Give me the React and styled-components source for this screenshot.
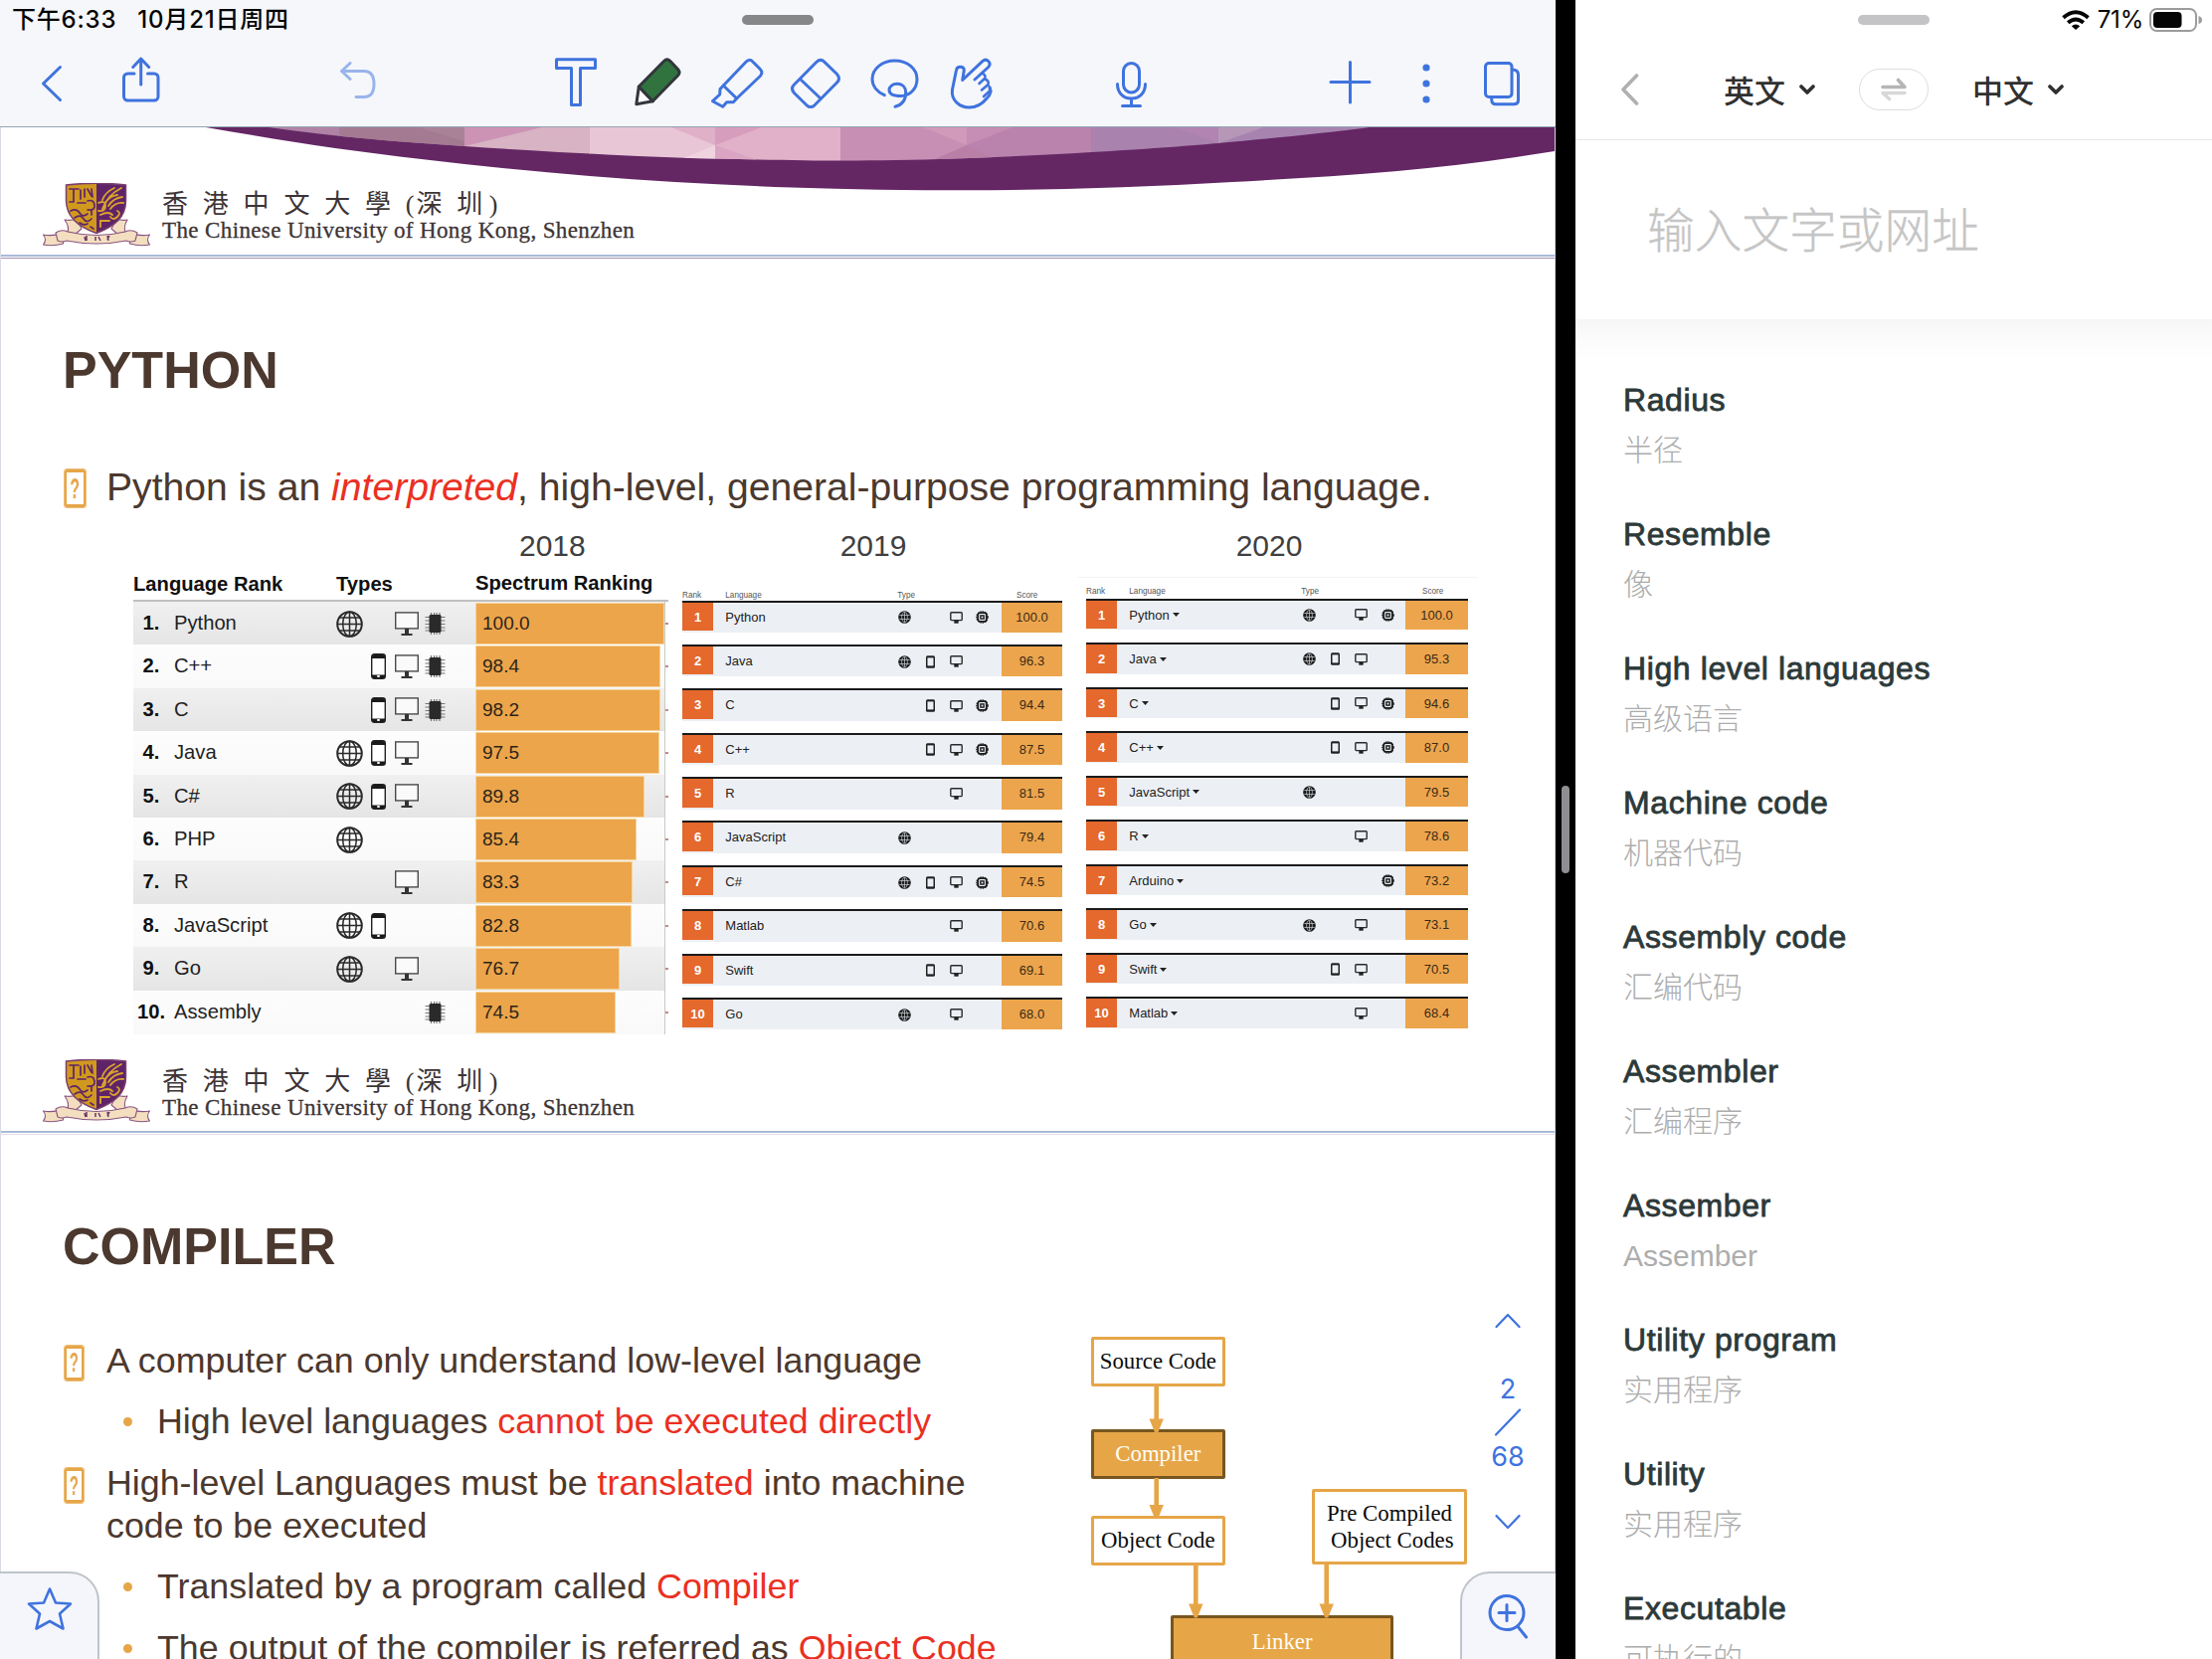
import React from "react";
import styled, { createGlobalStyle, css } from "styled-components";

const BLUE = "#3f73de";
const SANS = '"Liberation Sans", Arial, "Noto Sans CJK SC", sans-serif';
const UI = 'Inter, "Noto Sans CJK SC", sans-serif';

const Global = createGlobalStyle`
  * { box-sizing: border-box; }
  html, body { margin: 0; background: #000; }
  body { width: 2224px; height: 1668px; overflow: hidden; font-family: ${SANS}; }
  svg { display: block; flex: none; }
`;

/* ---------- screen ---------- */

const Screen = styled.div`
  display: flex;
  width: 2224px;
  height: 1668px;
  overflow: hidden;
  background: #000;
`;

const Divider = styled.div`
  width: 20px;
  height: 100%;
  display: flex;
  align-items: center;
  justify-content: center;
`;

const Grip = styled.div`
  width: 8px;
  height: 88px;
  border-radius: 4px;
  background: #8e8e93;
`;

const Handle = styled.div`
  width: 72px;
  height: 10px;
  border-radius: 5px;
  background: ${(p) => p.$color};
`;

/* ---------- notes app ---------- */

const NotesPane = styled.section`
  position: relative;
  width: 1564px;
  height: 1668px;
  display: flex;
  flex-direction: column;
  background: #fff;
  overflow: hidden;
`;

const NotesHeader = styled.header`
  height: 128px;
  background: #f6f7fb;
  border-bottom: 1px solid #93a5b3;
  flex: none;
`;

const StatusBar = styled.div`
  height: 42px;
  display: grid;
  grid-template-columns: 1fr 72px 1fr;
  align-items: start;
  padding: 0 12px;
`;

const StatusText = styled.div`
  display: flex;
  gap: 21px;
  font: 500 24px/40px ${UI};
  letter-spacing: 0.8px;
  color: #050505;
  white-space: nowrap;
`;

const HandleSlot = styled.div`
  padding-top: 15px;
`;

const Toolbar = styled.div`
  display: flex;
  height: 85px;
  padding-top: 11px;
`;

const ToolButton = styled.div`
  flex: none;
  width: 60px;
  height: 60px;
  margin-left: ${(p) => p.$before}px;
  svg {
    fill: none;
    stroke: ${BLUE};
    stroke-width: 3;
    stroke-linecap: round;
    stroke-linejoin: round;
    opacity: ${(p) => (p.$dim ? 0.5 : 1)};
  }
`;

const Tool = ({ before, dim, children }) => (
  <ToolButton $before={before} $dim={dim}>
    <svg width="60" height="60" viewBox="0 0 60 60">{children}</svg>
  </ToolButton>
);

const Pages = styled.main`
  flex: 1;
  min-height: 0;
  display: flex;
  flex-direction: column;
  border-left: 1px solid #d9dae6;
  border-right: 1px solid #d4d6de;
  overflow: hidden;
`;

const TailSlide = styled.article`
  flex: none;
  display: grid;
  height: 128px;
  > * { grid-area: 1 / 1; }
`;

const Slide = styled.article`
  flex: none;
  display: flex;
  flex-direction: column;
  height: ${(p) => p.$height}px;
`;

const PageRule = styled.div`
  flex: none;
  height: 4px;
  border-top: 2px solid #a9bad8;
  border-bottom: 1px solid ${(p) => p.$shade};
`;

const LogoRow = styled.div`
  display: flex;
  align-self: end;
  margin-top: auto;
  width: 100%;
  padding: 0 0 ${(p) => p.$below}px 41px;
  gap: 11px;
`;

const Wordmark = styled.div`
  display: flex;
  flex-direction: column;
  color: #3d3436;
  white-space: nowrap;
`;

const WordmarkHan = styled.div`
  display: flex;
  margin-top: 7.5px;
  font: 400 26px/30px "Liberation Serif", "Noto Sans CJK TC", serif;
  height: 30px;
`;

const Spaced = styled.span`
  letter-spacing: 14.8px;
`;

const Paren = styled.span`
  margin-right: 2px;
`;

const WordmarkLatin = styled.div`
  font: 400 23px/26px "Liberation Serif", serif;
  letter-spacing: 0.38px;
  margin-top: -2px;
  -webkit-text-stroke: 0.3px #3d3436;
`;

const SlideTitle = styled.h1`
  margin: 81.5px 0 0 62px;
  font: 700 52px/60px ${SANS};
  color: #4b382e;
`;

const BulletList = styled.div`
  display: flex;
  flex-direction: column;
  gap: 19.2px;
  margin-top: 64px;
  width: ${(p) => p.$width}px;
  padding-left: 64px;
  font-size: ${(p) => p.$size}px;
  line-height: ${(p) => p.$line}px;
  color: #4b382e;
  white-space: nowrap;
`;

const BulletRow = styled.div`
  display: flex;
`;

const MissingGlyph = styled.span`
  flex: none;
  width: ${(p) => (p.$big ? 21 : 19)}px;
  height: ${(p) => (p.$big ? 38 : 35)}px;
  margin: 6px ${(p) => (p.$big ? 21 : 23)}px 0 0;
  border: 2.500px solid #e6a648;
  border-width: 3px 2.500px;
  outline: 0.500px solid #edbd77;
  border-radius: 2px;
  color: #e6a648;
  font: 700 ${(p) => (p.$big ? 30 : 28)}px/30px "Liberation Sans", sans-serif;
  display: flex;
  justify-content: center;
  align-items: center;
`;

const Question = styled.span`
  transform: scaleX(0.52);
`;

const Dot = styled.span`
  flex: none;
  width: 9px;
  height: 9px;
  margin: 17px 25px 0 59px;
  border-radius: 50%;
  background: #e6a648;
`;

const Red = styled.span`
  color: #ea3023;
  font-style: ${(p) => (p.$italic ? "italic" : "normal")};
`;

/* ---------- ranking tables ---------- */

const Tables = styled.div`
  display: flex;
  align-items: flex-start;
  margin: 17px 0 0 133px;
`;

const TableColumn = styled.section`
  width: ${(p) => p.$width}px;
  margin-right: ${(p) => p.$after}px;
`;

const Year = styled.div`
  padding-left: ${(p) => p.$inset}px;
  font: 400 30px/36px ${SANS};
  color: #404040;
`;

const SpectrumHead = styled.div`
  display: grid;
  grid-template-columns: 204px 140px 1fr;
  height: 38.6px;
  padding-top: 8px;
  font: 700 20.2px/24px ${SANS};
  color: #111;
  border-bottom: 2px solid #bfc0c0;
  white-space: nowrap;
`;

const HeadCell = styled.span`
  margin-top: ${(p) => (p.$up ? -1 : 0)}px;
`;

const SpectrumRow = styled.div`
  display: grid;
  grid-template-columns: 36px 5px 162px 141px 191px 3px;
  height: 43.4px;
  line-height: 43.4px;
  font-size: 20.2px;
  color: #222;
`;

const SpectrumCell = styled.div`
  background: ${(p) =>
    p.$odd ? "linear-gradient(#f0f0f0, #e5e5e5)" : "linear-gradient(#fdfdfd, #f9f9f9)"};
  ${(p) =>
    p.$num &&
    css`
      font-weight: 700;
      color: #111;
      text-align: center;
    `}
`;

const IconStrip = styled(SpectrumCell)`
  display: flex;
  align-items: center;
`;

const Slot = styled.span`
  width: ${(p) => p.$w}px;
  display: flex;
  justify-content: center;
`;

const BarTrack = styled(SpectrumCell)`
  border-right: 1.5px solid #c9cbc6;
  padding: 1px 0;
`;

const Bar = styled.div`
  height: 100%;
  padding-left: 6px;
  line-height: 40px;
  font-size: 19px;
  color: #2c2418;
  background: #eca54b;
  border: 1px solid #f6d49a;
`;

const Tick = styled.div`
  align-self: center;
  height: 2px;
  background: #c78a86;
`;

const CardHead = styled.div`
  display: grid;
  grid-template-columns: 43.3px 173px 1fr 46px;
  align-items: end;
  height: ${(p) => p.$height}px;
  padding-bottom: ${(p) => p.$gap}px;
  font: 400 8.2px/10px ${SANS};
  color: #555;
`;

const TopHairline = styled.div`
  height: 1px;
  margin: 13px -9px -14px;
  background: #f4f4f4;
`;

const CardRow = styled.div`
  display: grid;
  grid-template-columns: 31px 180px 110px 1fr;
  height: ${(p) => p.$body}px;
  margin-bottom: ${(p) => p.$pitch - p.$body}px;
  border-top: 2px solid #1b1b1b;
  background: #ecf0f5;
  font-size: 13px;
  line-height: ${(p) => p.$body - 2}px;
  color: #222;
`;

const RankBadge = styled.div`
  height: 28.5px;
  background: #e5682c;
  color: #fff;
  font-weight: 700;
  text-align: center;
`;

const LangName = styled.div`
  display: flex;
  align-items: center;
  gap: 3px;
  padding-left: 12.3px;
`;

const CardIcons = styled.div`
  display: flex;
  align-items: center;
`;

const Score = styled.div`
  background: #eda54d;
  text-align: center;
  color: #3a2a16;
`;

const Caret = () => (
  <svg width="7" height="4" viewBox="0 0 7 4"><path d="M0 0h7L3.5 4z" fill="#222" /></svg>
);

const BigGlobe = () => (
  <svg width="27" height="27" viewBox="0 0 27 27" fill="none" stroke="#2a2a2a" strokeWidth="1.5">
    <circle cx="13.5" cy="13.5" r="12.3" strokeWidth="2" />
    <ellipse cx="13.5" cy="13.5" rx="6.8" ry="12.3" />
    <path d="M13.5 1v25M1 13.5h25M3 7h21M3 20h21" />
  </svg>
);
const BigPhone = () => (
  <svg width="15" height="26" viewBox="0 0 15 26">
    <rect x="0.7" y="0.7" width="13.6" height="24.6" rx="2.5" fill="#fff" stroke="#222" strokeWidth="1.4" />
    <path d="M1 5V3a2 2 0 0 1 2-2h9a2 2 0 0 1 2 2v2zM1 21.5V23a2 2 0 0 0 2 2h9a2 2 0 0 0 2-2v-1.500z" fill="#1a1a1a" />
    <rect x="6.300" y="22" width="2.400" height="2" fill="#fff" />
  </svg>
);
const BigMonitor = () => (
  <svg width="24" height="25" viewBox="0 0 24 25">
    <rect x="0.7" y="0.900" width="22.600" height="16" fill="#fafafa" stroke="#4a4a4a" strokeWidth="1.4" />
    <path d="M10 17h4v5h3.500v2h-11v-2H10z" fill="#333" />
  </svg>
);
const BigChip = () => (
  <svg width="21" height="24" viewBox="0 0 21 24">
    <path d="M0.500 5.500h20M0.500 9h20M0.500 12.500h20M0.500 16h20M0.500 19h20M6.500 1v22M9.500 1v22M12 1v22M15 1v22" stroke="#777" strokeWidth="1.2" />
    <rect x="4.500" y="3" width="12" height="18" rx="1.500" fill="#2a2a2a" />
  </svg>
);
const Globe = () => (
  <svg width="13" height="13" viewBox="0 0 13 13">
    <circle cx="6.500" cy="6.500" r="6.300" fill="#1c1c1c" />
    <g fill="none" stroke="#cfd3d8" strokeWidth="0.700">
      <ellipse cx="6.500" cy="6.500" rx="2.900" ry="5.200" />
      <path d="M6.500 1.300v10.400M1.300 4.500h10.400M1.300 8.500h10.400" />
    </g>
  </svg>
);
const Phone = () => (
  <svg width="9" height="13" viewBox="0 0 9 13">
    <rect x="0" y="0.200" width="9" height="12.600" rx="1.500" fill="#222" />
    <rect x="1.500" y="2.400" width="6" height="8" fill="#ecf0f5" />
  </svg>
);
const Monitor = () => (
  <svg width="13" height="12" viewBox="0 0 13 12">
    <rect x="0.800" y="0.800" width="11.400" height="7.800" rx="0.800" fill="none" stroke="#2a2a2a" strokeWidth="1.4" />
    <path d="M4.300 9h4.400v2.700H4.300z" fill="#222" />
  </svg>
);
const Chip = () => (
  <svg width="13" height="13" viewBox="0 0 13 13" fill="none" stroke="#1c1c1c">
    <circle cx="6.500" cy="6.500" r="5.500" strokeWidth="1.600" strokeDasharray="1.400 0.900" />
    <rect x="2.200" y="2.200" width="8.600" height="8.600" rx="2" strokeWidth="1.800" />
    <rect x="4.900" y="4.900" width="3.200" height="3.200" strokeWidth="1.400" />
  </svg>
);

const BIG = { g: BigGlobe, p: BigPhone, m: BigMonitor, c: BigChip };
const SMALL = { g: Globe, p: Phone, m: Monitor, c: Chip };

const TypeIcons = ({ set, types, width }) =>
  ["g", "p", "m", "c"].map((k) => {
    const Icon = set[k];
    return <Slot key={k} $w={width}>{types.includes(k) && <Icon />}</Slot>;
  });

const SPECTRUM = [
  ["Python", "gmc", "100.0", 189.5],
  ["C++", "pmc", "98.4", 186.3],
  ["C", "pmc", "98.2", 186.3],
  ["Java", "gpm", "97.5", 184.9],
  ["C#", "gpm", "89.8", 169.9],
  ["PHP", "g", "85.4", 162],
  ["R", "m", "83.3", 158],
  ["JavaScript", "gp", "82.8", 157.4],
  ["Go", "gm", "76.7", 145],
  ["Assembly", "c", "74.5", 140.6],
];

const Y2019 = [
  ["Python", "gmc", "100.0"],
  ["Java", "gpm", "96.3"],
  ["C", "pmc", "94.4"],
  ["C++", "pmc", "87.5"],
  ["R", "m", "81.5"],
  ["JavaScript", "g", "79.4"],
  ["C#", "gpmc", "74.5"],
  ["Matlab", "m", "70.6"],
  ["Swift", "pm", "69.1"],
  ["Go", "gm", "68.0"],
];

const Y2020 = [
  ["Python", "gmc", "100.0"],
  ["Java", "gpm", "95.3"],
  ["C", "pmc", "94.6"],
  ["C++", "pmc", "87.0"],
  ["JavaScript", "g", "79.5"],
  ["R", "m", "78.6"],
  ["Arduino", "c", "73.2"],
  ["Go", "gm", "73.1"],
  ["Swift", "pm", "70.5"],
  ["Matlab", "m", "68.4"],
];

const CardTable = ({ rows, caret, headHeight, headGap, body, pitch }) => (
  <>
    <CardHead $height={headHeight} $gap={headGap}>
      <span>Rank</span><span>Language</span><span>Type</span><span>Score</span>
    </CardHead>
    {rows.map(([name, types, score], i) => (
      <CardRow key={name} $body={body} $pitch={pitch}>
        <RankBadge>{i + 1}</RankBadge>
        <LangName>{name}{caret && <Caret />}</LangName>
        <CardIcons><TypeIcons set={SMALL} types={types} width={caret ? 26.3 : 25.9} /></CardIcons>
        <Score>{score}</Score>
      </CardRow>
    ))}
  </>
);

/* ---------- compile diagram ---------- */

const CompilerBody = styled.div`
  display: flex;
`;

const Diagram = styled.div`
  position: relative;
  flex: none;
  width: 380px;
  height: 340px;
  margin-top: 61px;
`;

const Node = styled.div`
  position: absolute;
  left: ${(p) => p.$x}px;
  top: ${(p) => p.$y}px;
  width: ${(p) => p.$w}px;
  height: ${(p) => p.$h}px;
  display: flex;
  flex-direction: column;
  align-items: center;
  justify-content: center;
  border: 3px solid ${(p) => (p.$solid ? "#775620" : "#e6a648")};
  border-radius: 2px;
  background: ${(p) => (p.$solid ? "#e6a648" : "#fff")};
  color: ${(p) => (p.$solid ? "#fffdf6" : "#0a0a0a")};
  font: 400 22.8px/26.700px "Liberation Serif", serif;
  padding-top: 1px;
  white-space: pre;
`;

const Arrows = styled.svg`
  position: absolute;
  left: 0;
  top: 0;
`;

const Arrow = ({ x, y1, y2 }) => (
  <g fill="#e6a648">
    <rect x={x - 2.3} y={y1} width="4.6" height={y2 - y1 - 10} />
    <path d={`M${x - 7.2} ${y2 - 14}h14.400L${x + 1.500} ${y2}h-3z`} />
  </g>
);

/* ---------- floating controls ---------- */

const PageNav = styled.nav`
  position: absolute;
  right: 34px;
  top: 1318px;
  width: 28px;
  display: flex;
  flex-direction: column;
  align-items: center;
  color: ${BLUE};
  font: 400 27px/34px ${UI};
  svg { fill: none; stroke: ${BLUE}; stroke-width: 2.2; stroke-linecap: round; stroke-linejoin: round; }
`;

const PageNumber = styled.span`
  margin-top: ${(p) => p.$before}px;
`;

const PageSlash = styled.svg`
  margin-top: 1.5px;
`;

const NextPage = styled.svg`
  margin-top: 38px;
`;

const CornerPanel = styled.div`
  position: absolute;
  bottom: -2px;
  ${(p) => p.$side}: -2px;
  width: ${(p) => p.$w}px;
  height: 90px;
  background: #f5f6fb;
  border: 2px solid #bfc5cb;
  border-radius: ${(p) => (p.$side === "left" ? "0 30px 0 0" : "30px 0 0 0")};
  padding: ${(p) => p.$pad};
  svg { fill: none; stroke: ${BLUE}; stroke-width: 3; stroke-linecap: round; stroke-linejoin: round; }
`;

/* ---------- translator app ---------- */

const TranslatePane = styled.section`
  width: 640px;
  height: 1668px;
  background: #fff;
  overflow: hidden;
  display: flex;
  flex-direction: column;
`;

const TranslateHeader = styled.header`
  flex: none;
  height: 141px;
  border-bottom: 1px solid #e6e6e6;
`;

const TranslateStatus = styled.div`
  display: grid;
  grid-template-columns: 1fr 72px 1fr;
  height: 42px;
`;

const DeviceInfo = styled.div`
  display: flex;
  justify-content: flex-end;
  align-items: center;
  height: 40px;
  padding-right: 9px;
  font: 400 24px/40px ${UI};
  letter-spacing: -0.2px;
  color: #050505;
`;

const Percent = styled.span`
  margin: 0 6px 0 8px;
`;

const LanguageBar = styled.div`
  display: flex;
  align-items: center;
  height: 96px;
  padding-left: 45px;
`;

const Language = styled.div`
  display: flex;
  align-items: center;
  gap: 14px;
  margin-left: ${(p) => p.$before}px;
  font: 500 31px/40px "Noto Sans CJK SC", sans-serif;
  color: #303030;
`;

const Swap = styled.div`
  width: 70px;
  height: 42px;
  margin-left: 44px;
  border: 1px solid #dedede;
  border-radius: 21px;
  display: flex;
  align-items: center;
  justify-content: center;
`;

const InputArea = styled.div`
  flex: none;
  height: 180px;
  padding-left: 72px;
  font: 300 47.700px/176px "Noto Sans CJK SC", sans-serif;
  color: #c5c5c5;
  -webkit-text-stroke: 0.3px #c5c5c5;
`;

const History = styled.div`
  flex: none;
  padding: 61px 0 0 48px;
  background: linear-gradient(#f6f6f6, #fbfbfb 18px, #fff 42px);
`;

const Entry = styled.div`
  height: 135px;
`;

const Word = styled.div`
  font: 400 32px/40px ${SANS};
  letter-spacing: 0.6px;
  color: #2c3939;
  -webkit-text-stroke: 0.8px #2c3939;
`;

const Meaning = styled.div`
  margin-top: 10px;
  font: 300 30px/42px "Liberation Sans", "Noto Sans CJK SC", sans-serif;
  color: #adadad;
`;

const WORDS = [
  ["Radius", "半径"],
  ["Resemble", "像"],
  ["High level languages", "高级语言"],
  ["Machine code", "机器代码"],
  ["Assembly code", "汇编代码"],
  ["Assembler", "汇编程序"],
  ["Assember", "Assember"],
  ["Utility program", "实用程序"],
  ["Utility", "实用程序"],
  ["Executable", "可执行的"],
];

const Chevron = () => (
  <svg width="16" height="10" viewBox="0 0 16 10">
    <path d="M2 2l6 6 6-6" fill="none" stroke="#303030" strokeWidth="3.600" strokeLinecap="round" strokeLinejoin="round" />
  </svg>
);

/* ---------- artwork ---------- */

const Banner = () => (
  <svg width="1562" height="66" viewBox="1 128 1562 66">
    <path d="M207 128C250 135.500 294 142.800 337 149C380 155 424 160.300 467 165C509 169.500 551 173.600 593 177C661 182.400 728 186.200 796 188.400C855 190.400 915 191.200 974 191.200C1062 191.200 1151 188 1239 183C1294 180 1350 177 1405 172C1458 167 1510 160.500 1563 152V128Z" fill="#642764" />
    <clipPath id="mosaic">
      <path d="M270 128C340 138 400 142.500 467 147C550 152.500 640 157.500 719 159.500C800 161.500 850 162 900 161C970 159.500 1040 156.500 1097 153C1150 150 1190 147 1225 144C1290 138 1330 134 1377 128Z" />
    </clipPath>
    <g clipPath="url(#mosaic)">
      <rect x="260" y="128" width="82" height="36" fill="#b083a6" />
      <rect x="341" y="128" width="126" height="36" fill="#a98298" />
      <path d="M341 128H420L467 142V150H341Z" fill="#a47a93" />
      <rect x="467" y="128" width="127" height="36" fill="#d8b3c3" />
      <path d="M467 128H545L467 147Z" fill="#cc93b5" />
      <rect x="593" y="128" width="126" height="36" fill="#e8c6d6" />
      <path d="M675 128H719V146Z" fill="#dfb0c8" />
      <path d="M719 146L680 162H719Z" fill="#f0d3df" />
      <rect x="719" y="128" width="126" height="36" fill="#e0b1c8" />
      <path d="M719 128H765L719 146Z" fill="#d79dbd" />
      <path d="M719 146L770 164H719Z" fill="#d9a5c2" />
      <rect x="845" y="128" width="127" height="36" fill="#c78fb4" />
      <path d="M928 128H972V146Z" fill="#d09aba" />
      <rect x="972" y="128" width="126" height="36" fill="#b983ae" />
      <path d="M972 128H1018L972 146Z" fill="#c68eb4" />
      <path d="M972 146L940 160H1000Z" fill="#b97fa6" />
      <rect x="1097" y="128" width="128" height="36" fill="#a982ae" />
      <path d="M1180 128H1225V144Z" fill="#b184b2" />
      <rect x="1225" y="128" width="160" height="36" fill="#a784b0" />
      <path d="M1225 128H1270L1225 144Z" fill="#b797b8" />
    </g>
  </svg>
);

const SHIELD = "M24.500 2Q55-1.500 84.500 2V18C84.500 34 74 43 55 50.500Q25 40 24.500 18Z";

const Crest = () => (
  <svg width="110" height="65" viewBox="0 0 110 65">
    <g fill="#f3dfc0" stroke="#8a5580" strokeWidth="1.100" strokeLinejoin="round">
      <path d="M24 37q5 1 11-1l5 10-6 5-8-2q2-5-3-12z" />
      <path d="M86 37q-5 1-11-1l-5 10 6 5 8-2q-2-5 2-12z" />
      <path d="M1.500 52q9 2 20-2v11q-10 3-20 1 4-5 0-10z" />
      <path d="M108.500 52q-9 2-20-2v11q10 3 20 1-4-5 0-10z" />
      <path d="M14 50q6-4 12-1 29 7 58 0 6-3 12 1l-2 8q-5 2-9 0-30 6-60 0-5 2-9 0z" />
    </g>
    <path d="M43 54l1 4M45 53v5M54 54v4M57 54l2 4M66 53l1 5M68 53l-2 4" stroke="#6a3566" strokeWidth="1.500" />
    <path d={SHIELD} fill="#d0991e" />
    <path d="M55 0.300Q70 0.500 84.500 2V18C84.500 34 74 43 55 50.500Z" fill="#5f2468" />
    <g fill="none" stroke="#5f2468" strokeWidth="1.700" strokeLinecap="round">
      <path d="M28 6h9M32 6v13h-4M39 7v9M43 6v8M46 6l4 7M50 6l1 8M36 20h8M46 18q6-2 7 4t-7 5M29 28q6-3 9 2t8 1M33 35q6-4 9 1t8 0M38 40q4 3 8 1M50 28v4M49 44l3 2" />
    </g>
    <g fill="none" stroke="#d9a32c" strokeWidth="1.900" strokeLinecap="round">
      <path d="M80 5Q66 12 61 26M73 5q-9 4-12 12M76 12q-8 1-12 8M81 14q-9 1-14 9M82 20q-8-1-13 6M57 20q7-3 7 3t-7 5M59 32q8-4 12 0M76 28q4 2 0 6t-7 0M59 44v-6h9" />
    </g>
    <path d={SHIELD} fill="none" stroke="#7a3f6e" strokeWidth="1.500" />
  </svg>
);

const UniversityLogo = ({ below }) => (
  <LogoRow $below={below}>
    <Crest />
    <Wordmark>
      <WordmarkHan><Spaced>香港中文大學</Spaced><Paren>(</Paren><Spaced>深</Spaced>圳<span>&nbsp;)</span></WordmarkHan>
      <WordmarkLatin>The Chinese University of Hong Kong, Shenzhen</WordmarkLatin>
    </Wordmark>
  </LogoRow>
);

const Missing = ({ big }) => (
  <MissingGlyph $big={big}><Question>?</Question></MissingGlyph>
);

export default function App() {
  return (
    <>
      <Global />
      <Screen>
        <NotesPane>
          <NotesHeader>
            <StatusBar>
              <StatusText><span>下午6:33</span><span>10月21日周四</span></StatusText>
              <HandleSlot><Handle $color="#868789" /></HandleSlot>
            </StatusBar>
            <Toolbar>
              <Tool before={22}><path d="M38.500 14.500L21.500 31l17 16.500" /></Tool>
              <Tool before={30}>
                <path d="M23 21H16.500a4 4 0 0 0-4 4V44a4 4 0 0 0 4 4H43a4 4 0 0 0 4-4V25a4 4 0 0 0-4-4H36.500M29.700 32V6M21.700 14.500L29.700 6l8 8.500" />
              </Tool>
              <Tool before={158} dim>
                <path d="M13.500 18.500H36C43 18.500 46 23 46 31.500S43 44.500 36 44.500H28M22 10.500L13.500 18.500 22 26.500" />
              </Tool>
              <Tool before={159}><path d="M10.500 6.800H49.500V15.500H34.500V52.500H25.500V15.500H10.500Z" /></Tool>
              <Tool before={22}>
                <path d="M11.300 34L8.800 51.700L25.300 48.700Z" fill="#fff" stroke="#33363d" />
                <path d="M11.300 34L36.500 8.500Q39.700 5.500 42.700 8.300L50.500 16.500Q53.500 20 50.500 23L25.300 48.700Z" fill="#30733e" stroke="#33363d" />
              </Tool>
              <Tool before={20}>
                <path d="M16.300 33L39 9.300Q42.500 5.500 46 9.200L53.300 16.500Q56.500 20.200 53.300 23.500L29.700 46Z" />
                <path d="M16.300 33L13 36.500L12.700 42L5.500 48.700L15.700 54.300L19.700 49.700H26.300L29.700 46" />
              </Tool>
              <Tool before={19}>
                <path d="M8.500 32L31 9.300Q35 5.500 39 9.300L51.500 21.500Q55.500 26 51.500 30L29 52.800Q25 56.300 21 52.800L8.500 40.500Q4.500 36 8.500 32ZM14.500 26.500L35 46" />
              </Tool>
              <Tool before={19}>
                <path d="M20.300 42.700C13 39.500 8 33.500 8 26.500C8 16 18 8 30.700 8S53 16 53 26.500C53 36 46 43.500 37 43.500C29 43.500 25 41 25 37.500C25 34 28.500 31.300 33 31.300C38.500 31.300 41.700 35 41.700 40C41.700 47 38 52.500 31 54.300" />
              </Tool>
              <Tool before={17}>
                <path d="M34 27L47.700 14.500C51.500 10 46 5 42 8.300L21.700 27.500L23.300 17.500C23.300 13.500 16.300 13 15.500 17.500L11.500 37C10 48 19 55 28.500 55C36 55 42 51 46 46C49.500 42.500 51 38.500 49 36" />
                <path d="M40.500 21.500Q45.500 23.500 43.500 27L38 32M44 27.500Q49 30 46.500 33.500L40.500 38.500M47 34Q51 36.500 48 40L42.500 45" strokeWidth="2.600" transform="translate(0.500 -1)" />
              </Tool>
              <Tool before={101}>
                <rect x="22.500" y="10.500" width="16" height="29.500" rx="8" />
                <path d="M16.500 31.500C16.500 40 22 46 30.500 46S44.500 40 44.500 31.500M30.500 46V53.500M21.500 53.500H39.500" />
              </Tool>
              <Tool before={160}><path d="M11 29.500H50M30.500 9.500V50" /></Tool>
              <Tool before={17}>
                <g fill={BLUE} stroke="none">
                  <circle cx="30" cy="15" r="3.600" /><circle cx="30" cy="31" r="3.600" /><circle cx="30" cy="47" r="3.600" />
                </g>
              </Tool>
              <Tool before={16}>
                <rect x="13.500" y="10.500" width="26.500" height="34" rx="3.500" />
                <path d="M40.500 17Q46.500 17 46.500 22.500V47.500Q46.500 51.800 42 51.800H24Q19.700 51.800 19.700 47V45" />
              </Tool>
            </Toolbar>
          </NotesHeader>

          <Pages>
            <TailSlide>
              <Banner />
              <UniversityLogo below={7.5} />
            </TailSlide>
            <PageRule $shade="#a392b2" />

            <Slide $height={877}>
              <SlideTitle>PYTHON</SlideTitle>
              <BulletList $width={1562} $size={39.11} $line={48}>
                <BulletRow>
                  <Missing big />
                  <span>Python is an <Red $italic>interpreted</Red>, high-level, general-purpose programming language.</span>
                </BulletRow>
              </BulletList>
              <Tables>
                <TableColumn $width={538} $after={14}>
                  <Year $inset={388}>2018</Year>
                  <SpectrumHead>
                    <HeadCell>Language Rank</HeadCell>
                    <HeadCell>Types</HeadCell>
                    <HeadCell $up>Spectrum Ranking</HeadCell>
                  </SpectrumHead>
                  {SPECTRUM.map(([name, types, value, width], i) => {
                    const odd = i % 2 === 0;
                    return (
                      <SpectrumRow key={name}>
                        <SpectrumCell $odd={odd} $num>{i + 1}.</SpectrumCell>
                        <SpectrumCell $odd={odd} />
                        <SpectrumCell $odd={odd}>{name}</SpectrumCell>
                        <IconStrip $odd={odd}><TypeIcons set={BIG} types={types} width={28.7} /></IconStrip>
                        <BarTrack $odd={odd}><Bar style={{ width }}>{value}</Bar></BarTrack>
                        <Tick />
                      </SpectrumRow>
                    );
                  })}
                </TableColumn>
                <TableColumn $width={382} $after={24}>
                  <Year $inset={158.7}>2019</Year>
                  <CardTable rows={Y2019} headHeight={37} headGap={0} body={32.5} pitch={44.38} />
                </TableColumn>
                <TableColumn $width={384} $after={0}>
                  <Year $inset={150.7}>2020</Year>
                  <TopHairline />
                  <CardTable rows={Y2020} caret headHeight={35} headGap={1.5} body={31.5} pitch={44.56} />
                </TableColumn>
              </Tables>
              <UniversityLogo below={7} />
            </Slide>
            <PageRule $shade="#e4dce8" />

            <Slide $height={560}>
              <SlideTitle>COMPILER</SlideTitle>
              <CompilerBody>
                <BulletList $width={1096} $size={35.8} $line={42.6}>
                  <BulletRow><Missing /><span>A computer can only understand low-level language</span></BulletRow>
                  <BulletRow><Dot /><span>High level languages <Red>cannot be executed directly</Red></span></BulletRow>
                  <BulletRow>
                    <Missing />
                    <span>High-level Languages must be <Red>translated</Red> into machine<br />code to be executed</span>
                  </BulletRow>
                  <BulletRow><Dot /><span>Translated by a program called <Red>Compiler</Red></span></BulletRow>
                  <BulletRow><Dot /><span>The output of the compiler is referred as <Red>Object Code</Red></span></BulletRow>
                </BulletList>
                <Diagram>
                  <Node $x={0} $y={0} $w={134.700} $h={50}>Source Code</Node>
                  <Node $x={0} $y={93.300} $w={134.700} $h={50} $solid>Compiler</Node>
                  <Node $x={0} $y={180} $w={134.700} $h={50}>Object Code</Node>
                  <Node $x={222} $y={153.300} $w={156} $h={76.500}><span>Pre Compiled</span><span> Object Codes</span></Node>
                  <Node $x={80.300} $y={280} $w={223.700} $h={54} $solid>Linker</Node>
                  <Arrows width="380" height="340">
                    <Arrow x={65.700} y1={50} y2={96.500} />
                    <Arrow x={65.700} y1={142} y2={183} />
                    <Arrow x={105.300} y1={229} y2={282.500} />
                    <Arrow x={236.700} y1={229} y2={282.500} />
                  </Arrows>
                </Diagram>
              </CompilerBody>
            </Slide>
          </Pages>

          <PageNav>
            <svg width="28" height="20" viewBox="0 0 28 20"><path d="M2.500 16L14 4l11.500 12" /></svg>
            <PageNumber $before={42}>2</PageNumber>
            <PageSlash width="28" height="28" viewBox="0 0 28 28"><path d="M2 26.500L26 1.500" /></PageSlash>
            <PageNumber $before={4.5}>68</PageNumber>
            <NextPage width="28" height="20" viewBox="0 0 28 20"><path d="M2.500 4L14 16 25.500 4" /></NextPage>
          </PageNav>
          <CornerPanel $side="left" $w={102} $pad="12px 0 0 26px">
            <svg width="48" height="46" viewBox="0 0 48 46">
              <path d="M24 3.500L30 17.500L45 18.500L34 28.500L37.500 43.500L24 36L10.500 43.500L14 28.500L3 18.500L18 17.500Z" strokeWidth="2.600" />
            </svg>
          </CornerPanel>
          <CornerPanel $side="right" $w={98} $pad="20px 0 0 26px">
            <svg width="44" height="48" viewBox="0 0 44 48">
              <circle cx="19" cy="19.500" r="17" />
              <path d="M11 19.500H27M19 11.500V27.500M30.500 34L38.500 44" />
            </svg>
          </CornerPanel>
        </NotesPane>

        <Divider><Grip /></Divider>

        <TranslatePane>
          <TranslateHeader>
            <TranslateStatus>
              <span />
              <HandleSlot><Handle $color="#c4c4c6" /></HandleSlot>
              <DeviceInfo>
                <svg width="28" height="21" viewBox="0 0 28 21" fill="none" stroke="#050505" strokeWidth="3.800">
                  <path d="M1.500 7.800Q14-3.200 26.500 7.800M6.200 12.800Q14 6 21.800 12.800" />
                  <path d="M14 20L9.800 16.200Q14 12.800 18.200 16.200Z" fill="#050505" stroke="none" />
                </svg>
                <Percent>71%</Percent>
                <svg width="54" height="24" viewBox="0 0 54 24">
                  <rect x="1" y="1" width="46" height="22" rx="6.500" fill="none" stroke="#9c9c9c" strokeWidth="2" />
                  <rect x="4" y="4" width="28.500" height="16" rx="4" fill="#050505" />
                  <path d="M49.500 8q3.500 1 3.500 4t-3.500 4z" fill="#9c9c9c" />
                </svg>
              </DeviceInfo>
            </TranslateStatus>
            <LanguageBar>
              <svg width="19" height="32" viewBox="0 0 19 32">
                <path d="M16.500 2L3 16l13.500 14" fill="none" stroke="#b0b0b0" strokeWidth="3.600" strokeLinecap="round" strokeLinejoin="round" />
              </svg>
              <Language $before={85}>英文<Chevron /></Language>
              <Swap>
                <svg width="26" height="24" viewBox="0 0 26 24" fill="none" strokeWidth="3.600" strokeLinecap="round" strokeLinejoin="round">
                  <path d="M2 9.500H24L17.500 2.500" stroke="#b5b5b5" />
                  <path d="M24 15.500H2L8.500 21.500" stroke="#d8d8d8" />
                </svg>
              </Swap>
              <Language $before={44}>中文<Chevron /></Language>
            </LanguageBar>
          </TranslateHeader>
          <InputArea>输入文字或网址</InputArea>
          <History>
            {WORDS.map(([word, meaning]) => (
              <Entry key={word}>
                <Word>{word}</Word>
                <Meaning>{meaning}</Meaning>
              </Entry>
            ))}
          </History>
        </TranslatePane>
      </Screen>
    </>
  );
}
